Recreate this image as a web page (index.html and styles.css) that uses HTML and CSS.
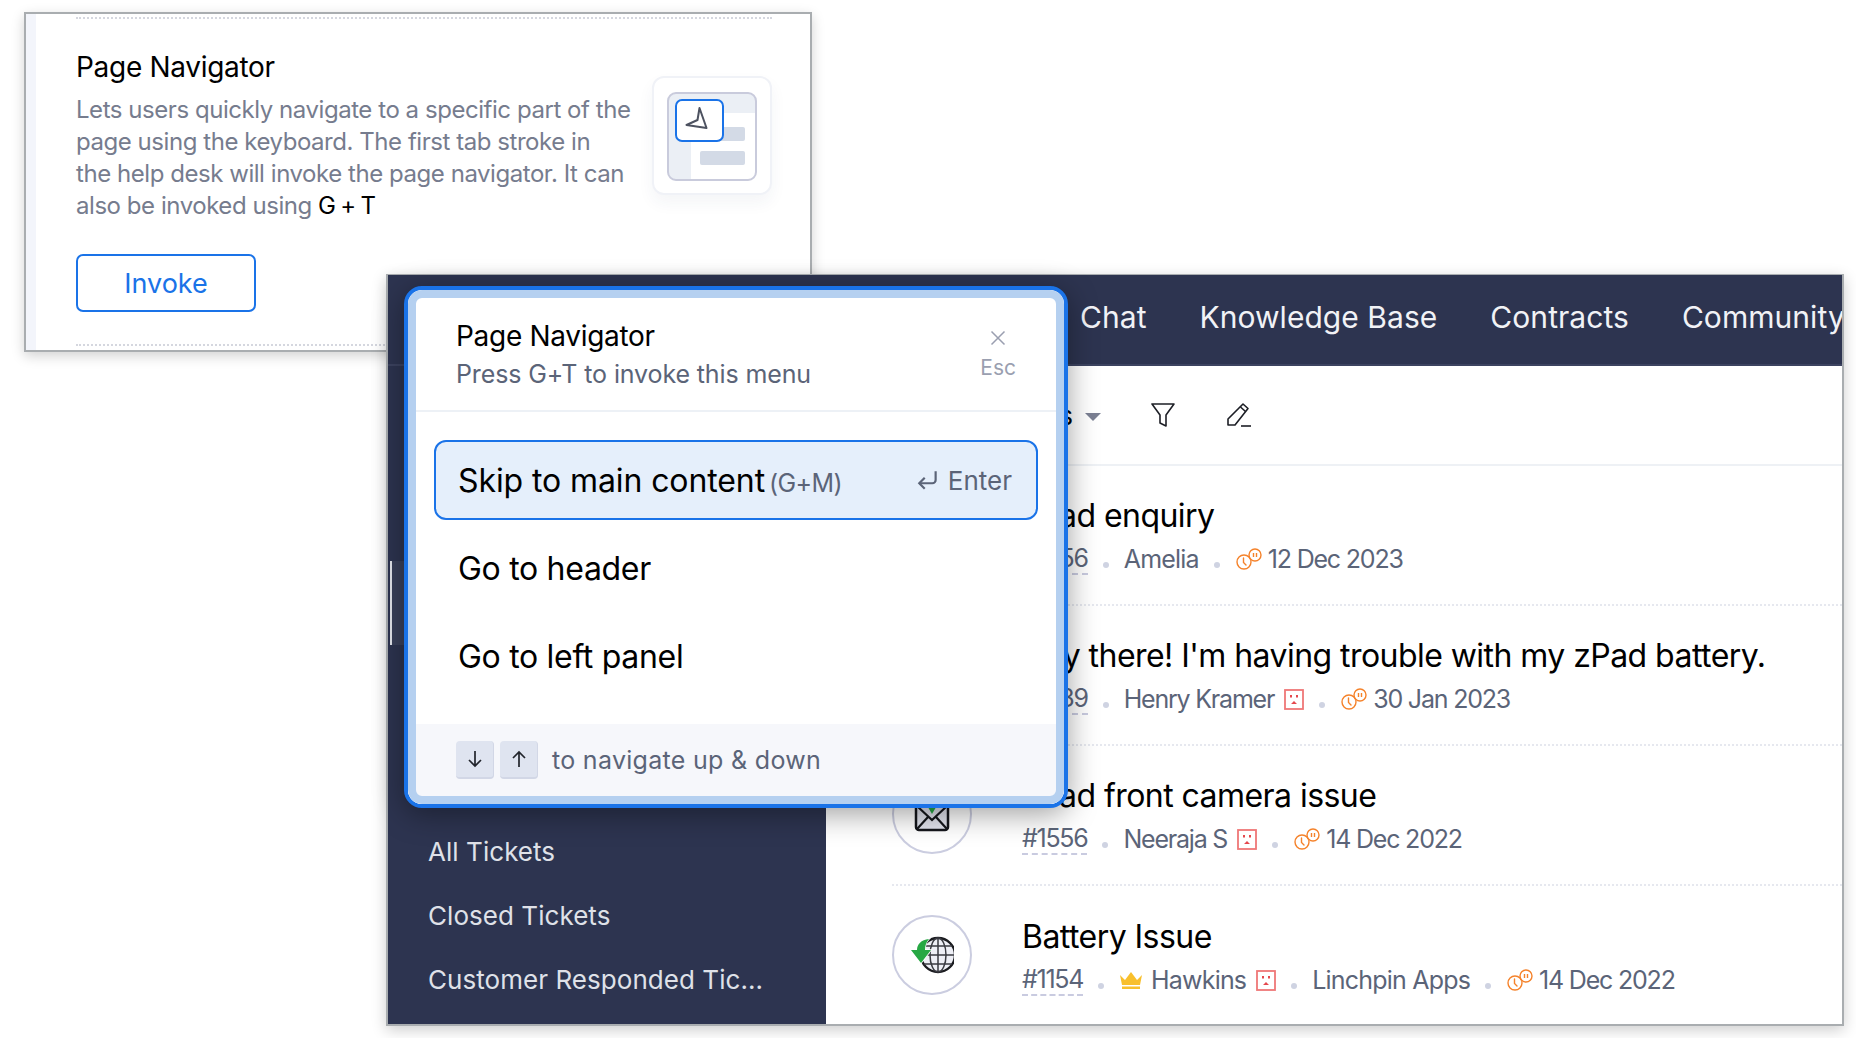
FILE: index.html
```html
<!DOCTYPE html>
<html lang="en">
<head>
  <meta charset="UTF-8">
  <title>Page Navigator</title>
  <link rel="stylesheet" href="styles.css">
</head>
<body>

  <!-- settings card behind the app window -->
  <section class="setting-card">
    <div class="setting-inner">
      <div class="setting-text">
        <h2>Page Navigator</h2>
        <p>Lets users quickly navigate to a specific part of the<br>page using the keyboard. The first tab stroke in<br>the help desk will invoke the page navigator. It can<br>also be invoked using <b>G + T</b></p>
        <button class="invoke-btn">Invoke</button>
      </div>
      <div class="illustration">
        <svg width="118" height="117" viewBox="0 0 118 117">
          <rect x="15" y="16" width="88" height="87" rx="8" fill="#fff"/>
          <path d="M15 36h88V24a8 8 0 0 0-8-8H23a8 8 0 0 0-8 8z" fill="#ebeff5"/>
          <path d="M15 36h23v67H23a8 8 0 0 1-8-8z" fill="#ebeff5"/>
          <rect x="50" y="50" width="42" height="14" rx="2" fill="#d3dae6"/>
          <rect x="47" y="74" width="45" height="14" rx="2" fill="#d3dae6"/>
          <rect x="15" y="16" width="88" height="87" rx="8" fill="none" stroke="#c9cbdc" stroke-width="2"/>
          <rect x="23" y="23" width="47" height="41" rx="6" fill="#fff" stroke="#1a73e8" stroke-width="2"/>
          <path d="M46.5 31L53.5 51L33.5 48L44.5 43z" fill="none" stroke="#4d5260" stroke-width="2" stroke-linejoin="round"/>
        </svg>
      </div>
    </div>
  </section>

  <!-- app window -->
  <main class="app">
    <header class="app-header">
      <nav class="top-nav">
        <a>Chat</a>
        <a>Knowledge Base</a>
        <a>Contracts</a>
        <a>Community</a>
      </nav>
    </header>
    <div class="app-body">
      <aside class="sidebar">
        <a>All Tickets</a>
        <a>Closed Tickets</a>
        <a>Customer Responded Tic...</a>
      </aside>
      <div class="content">
        <div class="toolbar">
          <span class="view-name">All Tickets</span>
          <span class="caret"></span>
          <svg class="tool-filter" width="26" height="26" viewBox="0 0 26 26" fill="none" stroke="#1d1f26" stroke-width="1.6" stroke-linejoin="round">
            <path d="M2 2h22l-8 11v11l-6-3V13z"/>
          </svg>
          <svg class="tool-pen" width="26" height="26" viewBox="0 0 26 26" fill="none" stroke="#1d1f26" stroke-width="1.6" stroke-linejoin="round">
            <path d="M17 2l5 4.500L9 23H2v-6z"/>
            <path d="M14.500 5l5 4.500"/>
            <path d="M15 24h10"/>
          </svg>
        </div>

        <div class="ticket">
          <div class="avatar"></div>
          <div class="ticket-body">
            <div class="ticket-title">zPad enquiry</div>
            <div class="meta">
              <span class="ticket-id">#1656</span><i class="sep"></i>
              <span>Amelia</span><i class="sep"></i>
              <svg class="clock" width="26" height="24" viewBox="0 0 26 24"><use href="#clock-icon"/></svg>
              <span class="date">12 Dec 2023</span>
            </div>
          </div>
        </div>

        <div class="ticket">
          <div class="avatar"></div>
          <div class="ticket-body">
            <div class="ticket-title">Hey there! I'm having trouble with my zPad battery.</div>
            <div class="meta">
              <span class="ticket-id">#1539</span><i class="sep"></i>
              <span class="tight">Henry Kramer</span>
              <svg class="sad" width="20" height="21" viewBox="0 0 20 21"><use href="#sad-icon"/></svg><i class="sep"></i>
              <svg class="clock" width="26" height="24" viewBox="0 0 26 24"><use href="#clock-icon"/></svg>
              <span class="date">30 Jan 2023</span>
            </div>
          </div>
        </div>

        <div class="ticket">
          <div class="avatar">
            <svg width="44" height="44" viewBox="0 0 44 44">
              <rect x="6" y="12" width="32" height="26" rx="3" fill="#e2e4ee" stroke="#15171c" stroke-width="2.500"/>
              <path d="M7 14l15 14 15-14M7 37l11-12M37 37L26 25" fill="none" stroke="#15171c" stroke-width="2.200"/>
              <path d="M15 10h14l-7 12z" fill="#27a844"/>
            </svg>
          </div>
          <div class="ticket-body">
            <div class="ticket-title">zPad front camera issue</div>
            <div class="meta">
              <span class="ticket-id">#1556</span><i class="sep"></i>
              <span class="tight">Neeraja S</span>
              <svg class="sad" width="20" height="21" viewBox="0 0 20 21"><use href="#sad-icon"/></svg><i class="sep"></i>
              <svg class="clock" width="26" height="24" viewBox="0 0 26 24"><use href="#clock-icon"/></svg>
              <span class="date">14 Dec 2022</span>
            </div>
          </div>
        </div>

        <div class="ticket">
          <div class="avatar">
            <svg width="44" height="44" viewBox="0 0 44 44">
              <circle cx="28" cy="22" r="17" fill="#eeeff6" stroke="#1b1c20" stroke-width="2.400"/>
              <ellipse cx="28" cy="22" rx="8" ry="17" fill="none" stroke="#3a3b42" stroke-width="1.500"/>
              <path d="M28 5v34M11 22h34M14 13h28M14 31h28" fill="none" stroke="#3a3b42" stroke-width="1.500"/>
              <path d="M1 17h6c0-6 4-10 12-11-3 3-4 7-4 11h6l-10 13z" fill="#27a844" stroke="#fff" stroke-width="1.500" paint-order="stroke"/>
            </svg>
          </div>
          <div class="ticket-body">
            <div class="ticket-title">Battery Issue</div>
            <div class="meta">
              <span class="ticket-id">#1154</span><i class="sep"></i>
              <svg class="crown" width="24" height="18" viewBox="0 0 24 18"><path d="M1 4l5 5 6-8 6 8 5-5-2 10H3zM3 15.500h18V18H3z" fill="#f8bf2c"/></svg>
              <span>Hawkins</span>
              <svg class="sad" width="20" height="21" viewBox="0 0 20 21"><use href="#sad-icon"/></svg><i class="sep"></i>
              <span>Linchpin Apps</span><i class="sep"></i>
              <svg class="clock" width="26" height="24" viewBox="0 0 26 24"><use href="#clock-icon"/></svg>
              <span class="date">14 Dec 2022</span>
            </div>
          </div>
        </div>
      </div>
    </div>
    <div class="rail-mark"></div>
  </main>

  <!-- page navigator popup -->
  <div class="navigator">
    <div class="nav-head">
      <div>
        <div class="nav-title">Page Navigator</div>
        <div class="nav-sub">Press G+T to invoke this menu</div>
      </div>
      <div class="nav-close">
        <svg width="16" height="16" viewBox="0 0 16 16" fill="none" stroke="#9a9fb0" stroke-width="1.500"><path d="M1.500 1.500l13 13M14.500 1.500l-13 13"/></svg>
        <span>Esc</span>
      </div>
    </div>
    <ul class="nav-list">
      <li class="active">
        <span>Skip to main content <small>(G+M)</small></span>
        <span class="enter">
          <svg width="24" height="24" viewBox="0 0 22 22" fill="none" stroke="#5b6478" stroke-width="2"><path d="M18 3v8a3 3 0 0 1-3 3H3"/><path d="M8 9l-5 5 5 5"/></svg>
          Enter
        </span>
      </li>
      <li>Go to header</li>
      <li>Go to left panel</li>
    </ul>
    <div class="nav-foot">
      <kbd><svg width="16" height="18" viewBox="0 0 16 18" fill="none" stroke="#22252c" stroke-width="1.700"><path d="M8 1v15M2 10l6 6 6-6"/></svg></kbd>
      <kbd><svg width="16" height="18" viewBox="0 0 16 18" fill="none" stroke="#22252c" stroke-width="1.700"><path d="M8 17V2M2 8l6-6 6 6"/></svg></kbd>
      <span>to navigate up &amp; down</span>
    </div>
  </div>

  <!-- shared icons -->
  <svg class="icon-defs" width="0" height="0">
    <defs>
      <g id="clock-icon" fill="none" stroke="#f5822a" stroke-width="1.400">
        <circle cx="8" cy="15" r="7"/>
        <path d="M7.500 11v4.500l2.500 2.500" stroke-linecap="round"/>
        <circle cx="19" cy="8" r="6" fill="#fff"/>
        <path d="M17.500 6v4M20.500 6v4"/>
      </g>
      <g id="sad-icon">
        <rect x="1" y="1" width="18" height="19" fill="#fff" stroke="#ef7777" stroke-width="1.800"/>
        <path d="M6 6h2v2.500H6zM12 6h2v2.500h-2zM7 15l3-3 3 3z" fill="#e5484d"/>
      </g>
    </defs>
  </svg>

</body>
</html>
```

FILE: styles.css
```css
* {
  box-sizing: border-box;
}

html, body {
  margin: 0;
  height: 100%;
}

body {
  position: relative;
  width: 1856px;
  height: 1038px;
  overflow: hidden;
  background: #fff;
  font-family: Inter, "Noto Sans", sans-serif;
  color: #000;
}

.icon-defs {
  position: absolute;
}

/* settings card */
.setting-card {
  position: absolute;
  left: 24px;
  top: 12px;
  width: 788px;
  height: 340px;
  background: #fff;
  border: 2px solid #a9adb0;
  box-shadow: 0 4px 12px rgba(0,0,0,0.18);
}

.setting-card::before {
  content: "";
  position: absolute;
  left: 0;
  top: 0;
  bottom: 0;
  width: 10px;
  background: #f3f5fb;
}

.setting-inner {
  position: absolute;
  left: 50px;
  top: 3px;
  width: 696px;
  height: 329px;
  border-top: 2px dotted #d5d7df;
  border-bottom: 2px dotted #d5d7df;
  display: flex;
  justify-content: space-between;
}

.setting-text h2 {
  margin: 31px 0 0;
  font-size: 28px;
  line-height: 34px;
  font-weight: 400;
  letter-spacing: -0.3px;
}

.setting-text p {
  margin: 10px 0 0;
  font-size: 24px;
  line-height: 32px;
  color: #767c8e;
  letter-spacing: -0.45px;
  white-space: nowrap;
}

.setting-text b {
  font-weight: 400;
  color: #000;
  letter-spacing: -1.2px;
}

.invoke-btn {
  display: block;
  margin-top: 32px;
  width: 180px;
  height: 58px;
  background: #fff;
  border: 2px solid #1a73e8;
  border-radius: 7px;
  color: #1a73e8;
  font: 400 27px Inter, sans-serif;
}

.illustration {
  margin-top: 57px;
  width: 120px;
  height: 119px;
  background: #fff;
  border: 2px solid #f0f2f7;
  border-radius: 12px;
  box-shadow: 0 8px 16px rgba(40,50,90,0.05);
  position: relative;
}

.illustration svg {
  position: absolute;
  left: -1px;
  top: -1px;
}

/* app window */
.app {
  position: absolute;
  left: 386px;
  top: 274px;
  width: 1458px;
  height: 752px;
  border: 2px solid #a9adb0;
  border-width: 1px 2px 2px 2px;
  background: #fff;
  box-shadow: 0 4px 14px rgba(0,0,0,0.2);
  display: flex;
  flex-direction: column;
  overflow: hidden;
}

.app-header {
  height: 91px;
  flex: none;
  background: #2d3450;
  border-bottom: 2px solid #3c4360;
  display: flex;
  align-items: center;
  padding: 0 0 5px 692px;
}

.top-nav {
  display: flex;
  gap: 53px;
  white-space: nowrap;
}

.top-nav a {
  font-size: 30px;
  color: #f1f2f6;
  letter-spacing: 0.05px;
}

.app-body {
  flex: 1;
  display: flex;
  min-height: 0;
}

.sidebar {
  width: 438px;
  flex: none;
  background: #2d3450;
  display: flex;
  flex-direction: column;
  justify-content: flex-end;
  padding: 0 0 12px 40px;
}

.sidebar a {
  height: 64px;
  line-height: 64px;
  font-size: 26px;
  color: #dfe1e8;
  letter-spacing: 0.05px;
  white-space: nowrap;
}

.rail-mark {
  position: absolute;
  left: 2px;
  top: 286px;
  width: 16px;
  height: 84px;
  background: #3a415b;
  border-left: 2px solid #e6e8ee;
}

.content {
  flex: 1;
  min-width: 0;
  overflow: hidden;
}

.toolbar {
  height: 100px;
  border-bottom: 2px solid #eef1f5;
  display: flex;
  align-items: center;
  padding-left: 67px;
  white-space: nowrap;
}

.view-name {
  width: 180px;
  font-size: 26px;
  margin-right: 12px;
  text-align: right;
}

.caret {
  width: 0;
  height: 0;
  border-left: 8px solid transparent;
  border-right: 8px solid transparent;
  border-top: 8px solid #7b8093;
  margin-top: 4px;
}

.tool-filter {
  margin-left: 49px;
}

.tool-pen {
  margin-left: 50px;
}

.ticket {
  height: 140px;
  margin-left: 66px;
  display: flex;
  align-items: center;
  border-bottom: 2px dotted #e6e8ef;
}

.ticket:last-child {
  border-bottom: 0;
}

.avatar {
  width: 80px;
  height: 80px;
  flex: none;
  margin-top: -2px;
  border: 2px solid #cbcde0;
  border-radius: 50%;
  display: flex;
  align-items: center;
  justify-content: center;
}

.ticket-body {
  margin: 5px 0 0 50px;
  white-space: nowrap;
}

.ticket-title {
  font-size: 32px;
  line-height: 42px;
  letter-spacing: -0.55px;
}

.meta {
  display: flex;
  align-items: center;
  margin-top: 1px;
  font-size: 25px;
  line-height: 42px;
  color: #5b6478;
  letter-spacing: -0.8px;
}

.ticket-id {
  line-height: 30px;
  letter-spacing: -1.3px;
  border-bottom: 2px dashed #c9cbe0;
}

.date {
  letter-spacing: -1.2px;
}

.tight {
  letter-spacing: -1.2px;
}

.sep {
  width: 6px;
  height: 6px;
  margin: 12px 15px 0;
  border-radius: 50%;
  background: #cfd3e2;
}

.sad {
  margin-left: 10px;
}

.crown {
  margin-right: 8px;
}

.clock {
  margin: 0 6px 0 1px;
}

/* page navigator popup */
.navigator {
  position: absolute;
  left: 404px;
  top: 286px;
  width: 664px;
  height: 522px;
  display: flex;
  flex-direction: column;
  background: #fff;
  border: 4px solid #1a73e8;
  border-radius: 18px;
  box-shadow: 0 6px 30px rgba(0,0,0,0.38);
  overflow: hidden;
}

.navigator::before {
  content: "";
  position: absolute;
  inset: 0;
  border: 8px solid #b5d0f0;
  border-radius: 14px;
  pointer-events: none;
  z-index: 2;
}

.nav-head {
  height: 122px;
  flex: none;
  padding: 27px 48px 0 48px;
  border-bottom: 2px solid #edf1f6;
  display: flex;
  justify-content: space-between;
}

.nav-title {
  font-size: 28px;
  line-height: 38px;
  font-weight: 400;
  letter-spacing: -0.3px;
}

.nav-sub {
  font-size: 25px;
  line-height: 38px;
  color: #5b6478;
  letter-spacing: -0.12px;
}

.nav-close {
  display: flex;
  flex-direction: column;
  align-items: center;
  padding-top: 13px;
  gap: 8px;
  color: #9a9fb0;
  font-size: 21px;
  line-height: 28px;
}

.nav-list {
  list-style: none;
  margin: 0;
  padding: 28px 26px 0;
  flex: 1;
}

.nav-list li {
  height: 88px;
  padding: 0 21px 0 24px;
  display: flex;
  align-items: center;
  justify-content: space-between;
  font-size: 32px;
  letter-spacing: -0.3px;
}

.nav-list li.active {
  height: 80px;
  margin-bottom: 4px;
  padding: 0 24px 0 22px;
  background: #e5effb;
  border: 2px solid #1a73e8;
  border-radius: 12px;
  letter-spacing: -0.1px;
}

.nav-list small {
  margin-left: -5px;
  font-size: 25px;
  color: #5b6478;
  letter-spacing: -0.6px;
}

.enter {
  display: flex;
  align-items: center;
  gap: 8px;
  font-size: 26px;
  color: #5b6478;
  letter-spacing: 0;
}

.nav-foot {
  height: 80px;
  flex: none;
  padding: 0 8px 8px 48px;
  background: #f6f7fb;
  display: flex;
  align-items: center;
  gap: 6px;
  font-size: 25px;
  color: #5b6478;
  letter-spacing: 0.3px;
}

.nav-foot kbd {
  width: 38px;
  height: 38px;
  background: #dfe4f0;
  border-bottom: 2px solid #d2d7e6;
  border-right: 1px solid #d2d7e6;
  border-radius: 4px;
  display: flex;
  align-items: center;
  justify-content: center;
}

.nav-foot span {
  margin-left: 8px;
}
```
